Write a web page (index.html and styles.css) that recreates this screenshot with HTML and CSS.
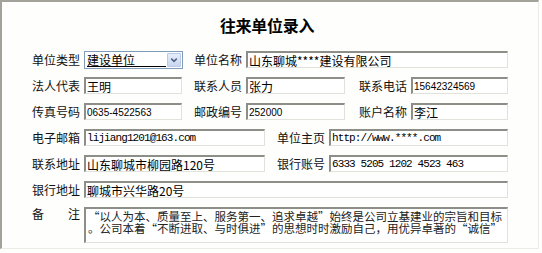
FILE: index.html
```html
<!DOCTYPE html>
<html lang="zh-CN">
<head>
    <meta charset="UTF-8">
    <title>往来单位录入</title>
    <link rel="stylesheet" href="styles.css">
</head>
<body>

    <div class="window">
        <h1 class="title">往来单位录入</h1>

        <div class="form">
            <div class="row">
                <label class="lbl">单位类型</label>
                <div class="select w99">
                    <span class="select-value">建设单位</span>
                    <span class="select-btn">
                        <svg width="13" height="14" viewBox="0 0 13 14">
                            <path d="M3.5 5.5 L6.5 8.5 L9.5 5.5" fill="none" stroke="#4d6185" stroke-width="1.6"/>
                        </svg>
                    </span>
                </div>
                <label class="lbl m11">单位名称</label>
                <input class="field w262" value="山东聊城****建设有限公司">
            </div>

            <div class="row">
                <label class="lbl">法人代表</label>
                <input class="field w98" value="王明">
                <label class="lbl m12">联系人员</label>
                <input class="field w99" value="张力">
                <label class="lbl m14">联系电话</label>
                <input class="field w97 num" value="15642324569">
            </div>

            <div class="row">
                <label class="lbl">传真号码</label>
                <input class="field w98 num" value="0635-4522563">
                <label class="lbl m12">邮政编号</label>
                <input class="field w99 num" value="252000">
                <label class="lbl m14">账户名称</label>
                <input class="field w97" value="李江">
            </div>

            <div class="row">
                <label class="lbl">电子邮箱</label>
                <input class="field w181 mono" value="lijiang1201@163.com">
                <label class="lbl m12">单位主页</label>
                <input class="field w179 mono" value="http://www.****.com">
            </div>

            <div class="row">
                <label class="lbl">联系地址</label>
                <input class="field w181" value="山东聊城市柳园路120号">
                <label class="lbl m12">银行账号</label>
                <input class="field w179 mono" value="6333 5205 1202 4523 463">
            </div>

            <div class="row">
                <label class="lbl">银行地址</label>
                <input class="field w424" value="聊城市兴华路20号">
            </div>

            <div class="row row-tall">
                <label class="lbl lbl-spread"><span>备</span><span>注</span></label>
                <textarea class="field memo w424">“以人为本、质量至上、服务第一、追求卓越”始终是公司立基建业的宗旨和目标
。公司本着“不断进取、与时俱进”的思想时时激励自己，用优异卓著的“诚信”</textarea>
            </div>
        </div>
    </div>

</body>
</html>
```

FILE: styles.css
```css
* {
    margin: 0;
    padding: 0;
    box-sizing: border-box;
}

body {
    font-family: "Noto Sans CJK SC", "Liberation Sans", sans-serif;
    font-size: 12px;
    color: #000;
    background: #fefefc;
}

.window {
    width: 539px;
    height: 249px;
    border-left: 2px solid #a3a39b;
    border-top: 2px solid #a3a39b;
    border-right: 1px solid #ecece6;
    border-bottom: 1px solid #ecece6;
    background: #fefefc;
}

.title {
    font-size: 16px;
    font-weight: bold;
    line-height: 16px;
    text-align: center;
    padding-top: 15px;
    padding-right: 6px;
    letter-spacing: -0.3px;
}

.form {
    padding-top: 18px;
    padding-left: 30px;
}

.row {
    display: flex;
    align-items: center;
    height: 17px;
    margin-bottom: 9px;
}

.row-tall {
    align-items: flex-start;
    height: 36px;
}

.lbl {
    width: 48px;
    margin-right: 4px;
    line-height: 17px;
    white-space: nowrap;
    color: #111;
}

.lbl-spread {
    display: flex;
    justify-content: space-between;
    line-height: 14px;
}

.m11 { margin-left: 11px; }
.m12 { margin-left: 12px; }
.m14 { margin-left: 14px; }

.w97 { width: 97px; }
.w98 { width: 98px; }
.w99 { width: 99px; }
.w179 { width: 179px; }
.w181 { width: 181px; }
.w262 { width: 262px; }
.w424 { width: 424px; }

.field {
    height: 17px;
    font-family: "Noto Sans CJK SC", "Liberation Sans", sans-serif;
    font-size: 12px;
    color: #000;
    background: #fff;
    padding: 0 1px;
    border-style: solid;
    border-width: 2px 1px 1px 2px;
    border-color: #8e8e88 #e2e2dc #e2e2dc #8e8e88;
    outline: none;
}

.num {
    font-family: "Liberation Sans", sans-serif;
    font-size: 10px;
}

.mono {
    font-family: "Liberation Mono", monospace;
    font-size: 11px;
    letter-spacing: -0.9px;
}

.memo {
    height: 36px;
    resize: none;
    overflow: hidden;
    font-size: 11.5px;
    line-height: 12px;
    padding: 1px 2px;
    color: #222;
}

.select {
    display: flex;
    align-items: center;
    height: 18px;
    margin-top: 1px;
    border: 1px solid #7f9db9;
    background: #fff;
    padding: 1px 1px 1px 2px;
}

.select-value {
    flex: 1;
    height: 14px;
    line-height: 13px;
    border-bottom: 1px solid #000;
    margin-right: 1px;
}

.select-btn {
    display: flex;
    align-items: center;
    justify-content: center;
    width: 14px;
    height: 14px;
    background: linear-gradient(#e6eefc, #c9d6ef);
    border: 1px solid #b9c9e6;
    border-radius: 1px;
}
```
